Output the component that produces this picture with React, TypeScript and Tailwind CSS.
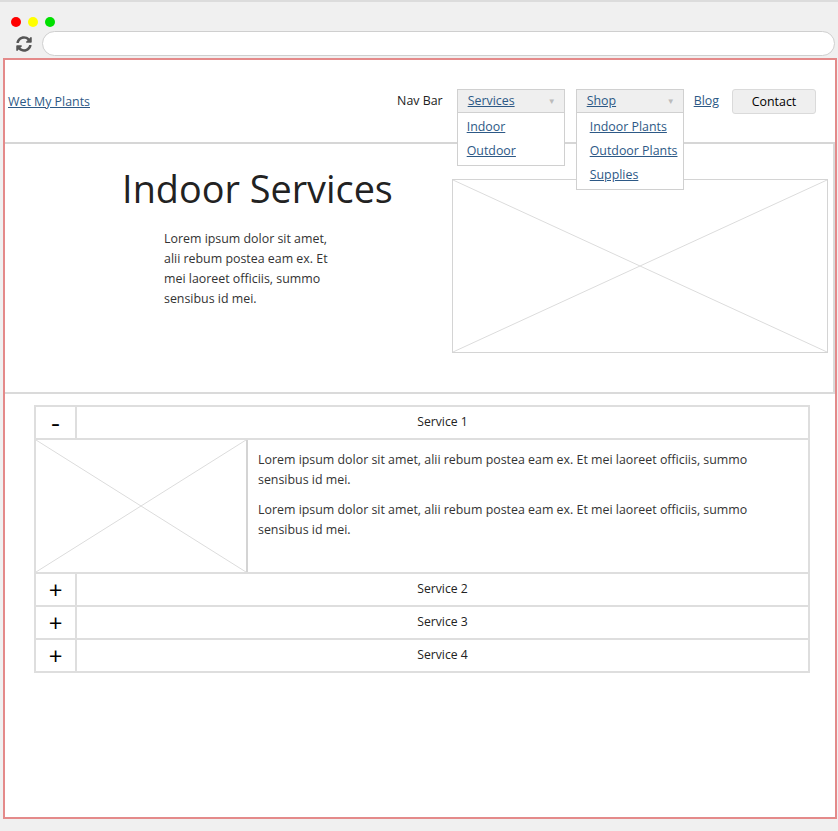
import { FaSyncAlt } from 'react-icons/fa';

const font = "font-['Open_Sans','Noto_Sans',sans-serif]";

function Placeholder({ className = '' }: { className?: string }) {
  return (
    <div className={`relative border border-[#d4d4d4] ${className}`}>
      <svg className="absolute inset-0 h-full w-full" viewBox="0 0 100 100" preserveAspectRatio="none">
        <line x1="0" y1="0" x2="100" y2="100" stroke="#dcdcdc" strokeWidth="1" vectorEffect="non-scaling-stroke" />
        <line x1="100" y1="0" x2="0" y2="100" stroke="#dcdcdc" strokeWidth="1" vectorEffect="non-scaling-stroke" />
      </svg>
    </div>
  );
}

function Dropdown({ label, items, itemPad }: { label: string; items: string[]; itemPad: string }) {
  return (
    <div className="relative w-[108px]">
      <div className="flex h-[24px] items-center justify-between border border-[#d0d0d0] bg-[#efefef] pl-[10px] pr-[8px]">
        <a href="#" className="text-[12.4px] text-[#2d5986] underline">{label}</a>
        <span className="text-[8px] text-[#bbbbbb]">▼</span>
      </div>
      <div className={`absolute left-0 top-[24px] z-10 flex w-[108px] flex-col gap-[4px] border border-t-0 border-[#d0d0d0] bg-white pb-[4px] pt-[4px] ${itemPad}`}>
        {items.map(item => (
          <a key={item} href="#" className="text-[12.4px] leading-[20px] text-[#2d5986] underline">{item}</a>
        ))}
      </div>
    </div>
  );
}

const lorem = 'Lorem ipsum dolor sit amet, alii rebum postea eam ex. Et mei laoreet officiis, summo sensibus id mei.';

function AccordionRow({ title, open }: { title: string; open?: boolean }) {
  return (
    <div className="flex h-[33px] border-b-2 border-[#dedede]">
      <div className="flex w-[41px] items-center justify-center border-r-2 border-[#dedede] text-[24px] leading-none text-black">
        {open ? <span className="text-[16px] font-bold">–</span> : '+'}
      </div>
      <div className="flex flex-1 items-center justify-center text-[12.2px] text-[#222]">{title}</div>
    </div>
  );
}

export default function App() {
  return (
    <div className={`flex h-[831px] w-[838px] flex-col bg-[#f0f0f0] ${font}`}>
      {/* Browser chrome */}
      <div className="h-[58px] border-t-2 border-[#dcdcdc] px-[3px]">
        <div className="flex gap-[7px] pl-[8px] pt-[15px]">
          <span className="h-[10px] w-[10px] rounded-full bg-[#ff0000]" />
          <span className="h-[10px] w-[10px] rounded-full bg-[#ffff00]" />
          <span className="h-[10px] w-[10px] rounded-full bg-[#00e000]" />
        </div>
        <div className="mt-[4px] flex items-center">
          <div className="flex w-[39px] justify-center pl-[3px]">
            <FaSyncAlt size={16} className="text-[#555]" />
          </div>
          <div className="h-[25px] flex-1 rounded-full border border-[#cfcfcf] bg-white" />
        </div>
      </div>

      {/* Page frame */}
      <div className="ml-[3px] flex h-[761px] w-[834px] flex-col border-2 border-[#e48a8a] bg-white">
        {/* Header */}
        <div className="flex h-[84px] border-b-2 border-[#d6d6d6]">
          <div className="relative w-[87px]">
            <Placeholder className="absolute inset-0 border-t-0 border-b-0" />
            <a href="#" className="absolute left-[3px] top-[33px] whitespace-nowrap text-[12.4px] text-[#2d5986] underline">Wet My Plants</a>
          </div>
          <div className="ml-auto flex items-start pr-[19px] pt-[29px]">
            <span className="mr-[14px] mt-[3px] text-[12.4px] text-[#222]">Nav Bar</span>
            <Dropdown label="Services" items={['Indoor', 'Outdoor']} itemPad="pl-[9px]" />
            <div className="ml-[11px]">
              <Dropdown label="Shop" items={['Indoor Plants', 'Outdoor Plants', 'Supplies']} itemPad="pl-[13px]" />
            </div>
            <a href="#" className="ml-[10px] mt-[3px] text-[12.4px] text-[#2d5986] underline">Blog</a>
            <button className="ml-[13px] h-[25px] w-[84px] rounded-[3px] border border-[#dadada] bg-[#efefef] pt-[1px] text-[12.4px] text-black">Contact</button>
          </div>
        </div>

        {/* Hero */}
        <div className="flex h-[250px] border-b-2 border-r-2 border-[#dadada]">
          <div className="flex w-[447px] flex-col pt-[20px]">
            <h1 className="pl-[58px] text-center text-[37.8px] font-normal leading-[50px] text-[#222]">Indoor Services</h1>
            <p className="ml-[159px] mt-[15px] w-[172px] text-[12.4px] leading-[20px] text-[#333]">{lorem}</p>
          </div>
          <Placeholder className="mt-[35px] h-[174px] w-[376px]" />
        </div>

        {/* Accordion */}
        <div className="ml-[29px] mt-[11px] w-[776px] border-2 border-b-0 border-[#dedede]">
          <AccordionRow title="Service 1" open />
          <div className="flex h-[134px] border-b-2 border-[#dedede]">
            <Placeholder className="h-full w-[212px] border-0 border-r-2" />
            <div className="flex flex-1 flex-col gap-[10px] pl-[10px] pr-[40px] pt-[10px] text-[12.4px] leading-[20px] text-[#333]">
              <p>{lorem}</p>
              <p>{lorem}</p>
            </div>
          </div>
          <AccordionRow title="Service 2" />
          <AccordionRow title="Service 3" />
          <AccordionRow title="Service 4" />
        </div>
      </div>
    </div>
  );
}
